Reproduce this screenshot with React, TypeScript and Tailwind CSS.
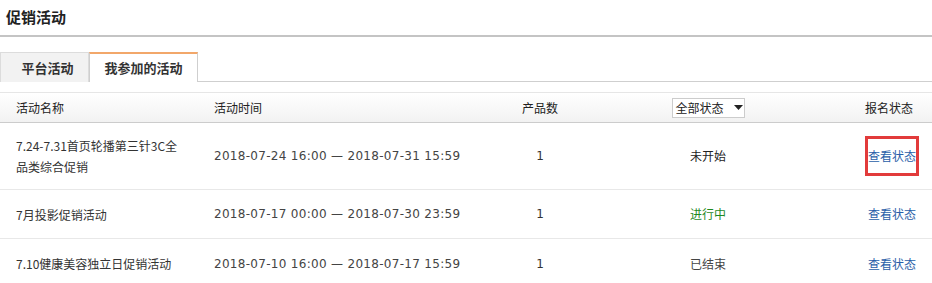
import React from "react";

const rows = [
  {
    name: "7.24-7.31首页轮播第三针3C全品类综合促销",
    time: "2018-07-24 16:00 — 2018-07-31 15:59",
    count: 1,
    status: "未开始",
    statusClass: "text-[#222]",
    h: "h-[67px]",
    boxed: true,
  },
  {
    name: "7月投影促销活动",
    time: "2018-07-17 00:00 — 2018-07-30 23:59",
    count: 1,
    status: "进行中",
    statusClass: "text-[#1f8a1f]",
    h: "h-[49px]",
    boxed: false,
  },
  {
    name: "7.10健康美容独立日促销活动",
    time: "2018-07-10 16:00 — 2018-07-17 15:59",
    count: 1,
    status: "已结束",
    statusClass: "text-[#444]",
    h: "h-[49px]",
    boxed: false,
  },
];

export default function App() {
  return (
    <div className="w-[932px] h-[283px] overflow-hidden bg-white text-[12px] text-[#333] font-['Noto_Sans_CJK_SC','Noto_Sans',sans-serif]">
      {/* title */}
      <div className="h-[35px] flex items-center pl-[6px] text-[15px] font-bold text-[#222]">促销活动</div>
      <div className="h-[2px] bg-[#c4c4c4]" />

      {/* tabs */}
      <div className="mt-[15px] flex h-[30px] border-b border-[#cfcfcf]">
        <div className="w-[89px] -mb-px pl-[6px] flex items-center justify-center bg-[#f2f2f2] border border-b-0 border-[#dcdcdc] text-[13px] font-bold text-[#333]">
          平台活动
        </div>
        <div className="w-[109px] -mb-px flex items-center justify-center bg-white border-x border-[#cfcfcf] border-t-2 border-t-[#f2a76a] text-[13px] font-bold text-[#333]">
          我参加的活动
        </div>
      </div>

      {/* table */}
      <div className="mt-[10px]">
        <div className="flex items-center h-[31px] border-t border-[#e6e6e6] border-b border-b-[#cccccc] bg-gradient-to-b from-white to-[#f2f2f2] text-[#222]">
          <div className="w-[198px] pl-[16px]">活动名称</div>
          <div className="w-[272px] pl-[16px]">活动时间</div>
          <div className="w-[140px] text-center">产品数</div>
          <div className="w-[196px] flex justify-center">
            <div className="w-[73px] h-[20px] bg-white border border-[#cccccc] flex items-center pl-[3px] gap-[10px]">
              <span>全部状态</span>
              <svg width="9" height="6" viewBox="0 0 9 6">
                <path d="M0 0 L9 0 L4.5 5 Z" fill="#222" />
              </svg>
            </div>
          </div>
          <div className="flex-1 text-right pr-[19px]">报名状态</div>
        </div>

        {rows.map((r, i) => (
          <div
            key={i}
            className={`flex items-center ${r.h} ${i < rows.length - 1 ? "border-b border-[#e8e8e8]" : ""}`}
          >
            <div className="w-[198px] pl-[16px] pr-[16px] leading-[21px]">{r.name}</div>
            <div className="w-[272px] pl-[16px] whitespace-nowrap font-['DejaVu_Sans',sans-serif] tracking-[0.3px] text-[#444]">{r.time}</div>
            <div className="w-[140px] text-center font-['DejaVu_Sans',sans-serif]">{r.count}</div>
            <div className={`w-[196px] text-center ${r.statusClass}`}>{r.status}</div>
            <div className="flex-1 flex justify-end pr-[13px]">
              <div
                className={`h-[40px] flex items-center text-[#2a5ea8] border-[3px] ${r.boxed ? "border-[#e23b3b]" : "border-transparent"}`}
              >
                查看状态
              </div>
            </div>
          </div>
        ))}
      </div>
    </div>
  );
}
